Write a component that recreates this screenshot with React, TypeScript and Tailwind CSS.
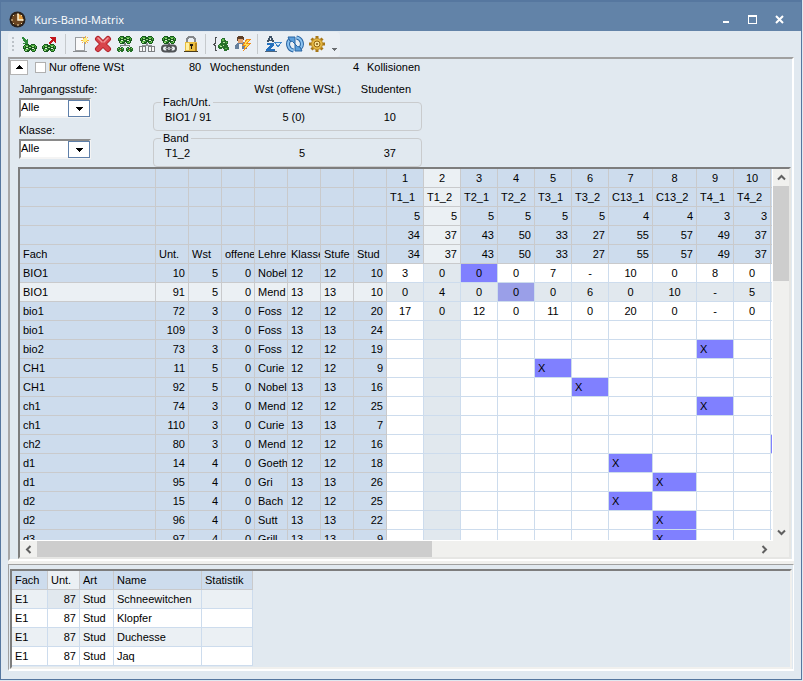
import React from "react";
import clsx from "clsx";

const META_HEADERS = [
  "Fach",
  "Unt.",
  "Wst",
  "offene",
  "Lehre",
  "Klasse",
  "Stufe",
  "Stud",
];

interface Band {
  name: string;
  wst: string;
  max: string;
  sum: string;
  wide?: boolean;
}

const BANDS: Band[] = [
  { name: "T1_1", wst: "5", max: "34", sum: "34" },
  { name: "T1_2", wst: "5", max: "37", sum: "37" },
  { name: "T2_1", wst: "5", max: "43", sum: "43" },
  { name: "T2_2", wst: "5", max: "50", sum: "50" },
  { name: "T3_1", wst: "5", max: "33", sum: "33" },
  { name: "T3_2", wst: "5", max: "27", sum: "27" },
  { name: "C13_1", wst: "4", max: "55", sum: "55", wide: true },
  { name: "C13_2", wst: "4", max: "57", sum: "57", wide: true },
  { name: "T4_1", wst: "3", max: "49", sum: "49" },
  { name: "T4_2", wst: "3", max: "37", sum: "37" },
  { name: "", wst: "", max: "", sum: "" },
];

interface Course {
  meta: string[];
  values?: string[];
  // index of the band the course is assigned to
  assigned?: number;
}

const COURSES: Course[] = [
  {
    meta: ["BIO1", "10", "5", "0", "Nobel", "12", "12", "10"],
    values: ["3", "0", "0", "0", "7", "-", "10", "0", "8", "0"],
    assigned: 2,
  },
  {
    meta: ["BIO1", "91", "5", "0", "Mend", "13", "13", "10"],
    values: ["0", "4", "0", "0", "0", "6", "0", "10", "-", "5"],
    assigned: 3,
  },
  {
    meta: ["bio1", "72", "3", "0", "Foss", "12", "12", "20"],
    values: ["17", "0", "12", "0", "11", "0", "20", "0", "-", "0"],
  },
  { meta: ["bio1", "109", "3", "0", "Foss", "13", "13", "24"] },
  { meta: ["bio2", "73", "3", "0", "Foss", "12", "12", "19"], assigned: 8 },
  { meta: ["CH1", "11", "5", "0", "Curie", "12", "12", "9"], assigned: 4 },
  { meta: ["CH1", "92", "5", "0", "Nobel", "13", "13", "16"], assigned: 5 },
  { meta: ["ch1", "74", "3", "0", "Mend", "12", "12", "25"], assigned: 8 },
  { meta: ["ch1", "110", "3", "0", "Curie", "13", "13", "7"] },
  { meta: ["ch2", "80", "3", "0", "Mend", "12", "12", "16"], assigned: 10 },
  { meta: ["d1", "14", "4", "0", "Goeth", "12", "12", "18"], assigned: 6 },
  { meta: ["d1", "95", "4", "0", "Gri", "13", "13", "26"], assigned: 7 },
  { meta: ["d2", "15", "4", "0", "Bach", "12", "12", "25"], assigned: 6 },
  { meta: ["d2", "96", "4", "0", "Sutt", "13", "13", "22"], assigned: 7 },
  { meta: ["d3", "97", "4", "0", "Grill", "13", "13", "9"], assigned: 7 },
];

const STUDENTS = ["Schneewitchen", "Klopfer", "Duchesse", "Jaq"];

const SELECTED_ROW = 1;
const SELECTED_BAND = 1;
const RIGHT_ALIGNED = [1, 2, 3, 7];

const CELL =
  "h-[19px] overflow-hidden whitespace-nowrap border-b border-r px-[3px] py-0 font-normal leading-[18px]";

/* ---------- icons ---------- */

interface LeavesProps {
  x?: number;
  y?: number;
}

// Pair of green course rings, shared by most toolbar icons
function Leaves({ x = 0, y = 0 }: LeavesProps) {
  return (
    <g transform={`translate(${x} ${y})`}>
      <path
        d="M2 0h4v1h2V0h4v1h1v1h1v3h-1v2h-1v1H9V7H8V6H7v1H6v1H2V7H1V5H0V2h1V1h1z"
        fill="#175a1c"
      />
      <path
        d="M2 1h3v1H2zM8 1h4v1H8zM1 2h1v2H1zM12 2h1v2h-1zM2 5h4v1H2zM9 6h3v1H9z"
        fill="#4fae3f"
      />
      <path d="M3 2h2v1H3zM9 2h2v1H9zM6 3h2v1H6zM2 6h2v1H2zM11 5h1v1h-1z" fill="#9bdc7c" />
      <path d="M3 4h2v1H3zM9 4h2v1H9z" fill="#e4f4dc" />
    </g>
  );
}

function ToolIcon({ children }: { children: React.ReactNode }) {
  return (
    <svg
      width="18"
      height="18"
      viewBox="0 0 18 18"
      shapeRendering="crispEdges"
      aria-hidden="true"
    >
      {children}
    </svg>
  );
}

const ImportIcon = (
  <ToolIcon>
    <Leaves x={3} y={9} />
    <path
      d="M2 2h2v1h1v1h1v1h1V4h1v5H3V8h2V7H4V6H3V4H2z"
      fill="#2f8a3a"
    />
  </ToolIcon>
);

const ExportIcon = (
  <ToolIcon>
    <Leaves x={0} y={9} />
    <path
      d="M8 2h6v6h-1V7h-1V6h-1v1h-1v1H9v1H7V7h1V6h1V5h1V4H9V3H8z"
      fill="#c3161c"
    />
  </ToolIcon>
);

const NewIcon = (
  <ToolIcon>
    <path d="M3.500 2.500h9v13h-9z" fill="#fafafa" stroke="#9a9da0" />
    <path d="M1 16h14v1H1z" fill="#8c8f92" />
    <path
      d="M13 1v8M9 5h8M10 2l6 6M16 2l-6 6"
      stroke="#f5b041"
      strokeWidth="1"
    />
    <circle cx="13" cy="5" r="2" fill="#fff07a" />
  </ToolIcon>
);

const DeleteIcon = (
  <ToolIcon>
    <g shapeRendering="auto" strokeLinecap="round">
      <path d="M4 4l10 10M14 4L4 14" stroke="#b3232b" strokeWidth="6" />
      <path d="M4 4l10 10M14 4L4 14" stroke="#d9464c" strokeWidth="4" />
      <path d="M4 3l4 4M14 3l-4 4" stroke="#f0989a" strokeWidth="1.5" />
    </g>
  </ToolIcon>
);

const TreeCoursesIcon = (
  <ToolIcon>
    <Leaves x={2} y={1} />
    <path d="M8 8h2v2h4v2h-1v-1H5v1H4v-2h4z" fill="#7d8083" />
    <path
      d="M2 12h2v1h1v-1h2v1h1v3H7v1H5v-1H4v1H2v-1H1v-3h1zM11 12h2v1h1v-1h2v1h1v3h-1v1h-2v-1h-1v1h-2v-1h-1v-3h1z"
      fill="#246f28"
    />
    <path
      d="M2 13h1v1H2zM6 13h1v1H6zM3 15h1v1H3zM11 13h1v1h-1zM15 13h1v1h-1zM12 15h1v1h-1z"
      fill="#86ce68"
    />
    <path d="M4 14h1v1H4zM13 14h1v1h-1z" fill="#d98a3c" />
  </ToolIcon>
);

const TreeTableIcon = (
  <ToolIcon>
    <Leaves x={2} y={1} />
    <path d="M8 8h2v2h4v2h-1v-1H5v1H4v-2h4z" fill="#8d9093" />
    <path
      d="M1.500 11.500h6v5h-6zM10.500 11.500h6v5h-6zM4.500 11v5M13.500 11v5"
      fill="#f7f7f7"
      stroke="#7d8083"
    />
  </ToolIcon>
);

const TreeLinkIcon = (
  <ToolIcon>
    <Leaves x={2} y={1} />
    <path d="M8 8h2v2H8z" fill="#6c6f72" />
    <g shapeRendering="auto" fill="none">
      <rect x="2" y="10.500" width="9" height="6" rx="3" stroke="#505356" strokeWidth="2" />
      <rect x="7" y="10.500" width="9" height="6" rx="3" stroke="#505356" strokeWidth="2" />
      <path d="M5 13.500h8" stroke="#a6a9ac" />
    </g>
  </ToolIcon>
);

const LockIcon = (
  <ToolIcon>
    <path
      d="M5 8V4l2-2h4l2 2v4"
      fill="none"
      stroke="#85888b"
      strokeWidth="2"
    />
    <path d="M3 7h12v9H3z" fill="#e9bd3f" />
    <path d="M4 8h3v7H4z" fill="#fff0a3" />
    <path d="M13 8h2v8h-2z" fill="#b5831c" />
    <path d="M2 16h14v1H2z" fill="#4a3c1a" />
    <path d="M8 9h3v2h-1v3H9v-3H8z" fill="#1f1a10" />
  </ToolIcon>
);

const BraceIcon = (
  <ToolIcon>
    <path
      d="M5 2.500H3.500V8L1.500 9.500l2 1V15.500H5"
      fill="none"
      stroke="#4b4e51"
    />
    <path
      d="M10 3h3v2h1v1h2v3h-1v1h1v2h1v3h-2v1h-3v-2h-1v-1h-1v1H7v-1H6v-3h1V9h1V8h1V4h1z"
      fill="#276f2b"
    />
    <path
      d="M10 4h2v2h-2zM7 10h2v1H7zM14 7h1v1h-1zM13 13h2v1h-2z"
      fill="#5fb94c"
    />
    <path d="M11 7h2v1h-2zM8 11h2v1H8zM11 10h1v1h-1z" fill="#b6e4a0" />
  </ToolIcon>
);

const UserFlashIcon = (
  <ToolIcon>
    <path d="M4 7h6l3 3v4H1v-4z" fill="#66809d" />
    <path d="M4 3h5v5H4z" fill="#e2a473" />
    <path d="M4 1h4l2 1v3H9V4H4v2H3V2z" fill="#5d3e28" />
    <path d="M5 9h3v5H5z" fill="#f3f3f3" />
    <path d="M12 4h5l-3 4h3l-8 9 2-6H8z" fill="#f08a1c" />
    <path d="M13 5h2l-3 4h3l-4 4 1-3h-2z" fill="#ffe14f" />
  </ToolIcon>
);

const SortIcon = (
  <ToolIcon>
    <path
      d="M5 1h3v2h1v2h1v2H8V6H5v1H3V5h1V3h1zM6 3v2h1V3z"
      fill="#3e5266"
      fillRule="evenodd"
    />
    <path
      d="M3 8h7v3H9v1H8v1H7v1h4v2H2v-2h1v-1h1v-1h1v-1h1v-1H3z"
      fill="#2470bd"
    />
    <path d="M1 16h12v1H1z" fill="#50667c" />
    <path d="M11 7.500h6L14 12z" fill="#d9ebfa" stroke="#3f86c9" />
  </ToolIcon>
);

const RefreshIcon = (
  <ToolIcon>
    <g shapeRendering="auto">
      <path
        d="M7.500 15.500A6.500 6.500 0 0 1 4 4.500M10.500 2.500A6.500 6.500 0 0 1 14 13.500"
        fill="none"
        stroke="#2864a3"
        strokeWidth="4"
      />
      <path
        d="M7.500 15.500A6.500 6.500 0 0 1 4 4.500M10.500 2.500A6.500 6.500 0 0 1 14 13.500"
        fill="none"
        stroke="#8cc3f0"
        strokeWidth="2"
      />
      <path
        d="M2 2h7v7L6.500 6.500 4 6zM16 16H9V9l2.500 2.500L14 12z"
        fill="#5d9fda"
        stroke="#2864a3"
      />
    </g>
  </ToolIcon>
);

const GearIcon = (
  <ToolIcon>
    <g shapeRendering="auto">
      <path
        d="M9 1v16M1 9h16M3.500 3.500l11 11M14.500 3.500l-11 11"
        stroke="#a87716"
        strokeWidth="3"
      />
      <circle cx="9" cy="9" r="5.500" fill="#e6ba45" stroke="#c0902a" />
      <circle cx="9" cy="9" r="3" fill="#f8e397" stroke="#93640f" />
      <circle cx="9" cy="9" r="1" fill="#7c5410" />
    </g>
  </ToolIcon>
);

const TOOL_GROUPS = [
  [
    { label: "Import", icon: ImportIcon },
    { label: "Export", icon: ExportIcon },
  ],
  [
    { label: "Neu", icon: NewIcon },
    { label: "Löschen", icon: DeleteIcon },
    { label: "Kurse", icon: TreeCoursesIcon },
    { label: "Bänder", icon: TreeTableIcon },
    { label: "Koppeln", icon: TreeLinkIcon },
    { label: "Fixieren", icon: LockIcon },
  ],
  [
    { label: "Klammer", icon: BraceIcon },
    { label: "Kollisionen", icon: UserFlashIcon },
  ],
  [
    { label: "Sortieren", icon: SortIcon },
    { label: "Aktualisieren", icon: RefreshIcon },
    { label: "Einstellungen", icon: GearIcon },
  ],
];

/* ---------- window parts ---------- */

function TitleBar() {
  return (
    <header className="flex h-[29px] shrink-0 items-center bg-[#6283a8] pl-2 pr-2 pt-1.5 text-white">
      <svg width="18" height="18" viewBox="0 0 18 18" aria-hidden="true">
        <circle cx="8.500" cy="8.500" r="8" fill="#2b221b" />
        <circle cx="8.500" cy="8.500" r="6" fill="#6b4520" />
        <path d="M9 9V3a6 6 0 0 1 5 6z" fill="#e09a3c" />
        <path
          d="M9 2v2M9 13v2M2 9h2M13 9h2M4 4l1 1M12 12l1 1M4 13l1-1M12 5l1-1"
          stroke="#f3d9a6"
        />
        <path d="M9 3v6h5" fill="none" stroke="#fff3d5" strokeWidth="1.5" />
      </svg>
      <h1 className="ml-[7px] flex-1 font-['Open_Sans','Noto_Sans',sans-serif] text-[11px] leading-4">
        Kurs-Band-Matrix
      </h1>
      <button
        type="button"
        aria-label="Minimieren"
        className="flex h-4 w-[27px] items-center justify-center"
      >
        <svg width="11" height="11" shapeRendering="crispEdges">
          <path d="M3 7h6v2H3z" fill="#fff" />
        </svg>
      </button>
      <button
        type="button"
        aria-label="Maximieren"
        className="flex h-4 w-[27px] items-center justify-center"
      >
        <svg width="11" height="11" shapeRendering="crispEdges">
          <path d="M1 1h9v9H1zM2 3v6h7V3z" fill="#fff" fillRule="evenodd" />
        </svg>
      </button>
      <button
        type="button"
        aria-label="Schließen"
        className="flex h-4 w-[27px] items-center justify-center"
      >
        <svg width="11" height="11">
          <path d="M2 2l7 7M9 2l-7 7" stroke="#fff" strokeWidth="2" />
        </svg>
      </button>
    </header>
  );
}

function Toolbar() {
  return (
    <div
      role="toolbar"
      className="flex h-[25px] items-center self-start rounded bg-[#eaeff4] pb-0.5 pl-1"
    >
      <div className="mr-1 flex flex-col gap-0.5">
        {[0, 1, 2, 3].map((dot) => (
          <span key={dot} className="size-0.5 bg-[#bcc2c8]" />
        ))}
      </div>
      {TOOL_GROUPS.map((group, i) => (
        <React.Fragment key={group[0].label}>
          {i > 0 && <span className="mx-[3px] h-5 w-0.5 border-l border-[#c6cacd]" />}
          {group.map(({ label, icon }) => (
            <button
              key={label}
              type="button"
              aria-label={label}
              className="flex h-[22px] w-[22px] items-center justify-center"
            >
              {icon}
            </button>
          ))}
        </React.Fragment>
      ))}
      <button
        type="button"
        aria-label="Weitere Optionen"
        className="flex h-[22px] w-3 items-end justify-center pb-1"
      >
        <svg width="5" height="3" shapeRendering="crispEdges">
          <path d="M0 0h5L2.500 3z" fill="#6b6e71" />
        </svg>
      </button>
    </div>
  );
}

interface ComboProps {
  id: string;
  label: string;
}

function Combo({ id, label }: ComboProps) {
  return (
    <div className="flex flex-col gap-0.5">
      <label htmlFor={id} className="leading-[13px]">
        {label}
      </label>
      <div className="relative h-5 w-[72px]">
        <select
          id={id}
          className="h-full w-full appearance-none rounded-none border-2 border-b-[#f4f4f4] border-l-[#8a8a8a] border-r-[#f4f4f4] border-t-[#8a8a8a] bg-white pb-0.5 leading-[14px]"
        >
          <option>Alle</option>
        </select>
        <span className="pointer-events-none absolute bottom-px right-px flex h-[17px] w-[22px] items-center justify-center border border-[#5f80aa] bg-white">
          <svg width="8" height="4" shapeRendering="crispEdges">
            <path d="M0 0h8L4 4z" fill="#000" />
          </svg>
        </span>
      </div>
    </div>
  );
}

interface SummaryBoxProps {
  legend: string;
  name: string;
  wst: string;
  students: string;
}

function SummaryBox({ legend, name, wst, students }: SummaryBoxProps) {
  return (
    <fieldset className="h-9 rounded border border-[#c9cbcd] pl-[11px] pr-[25px]">
      <legend className="-ml-1 px-0.5 leading-[14px]">{legend}</legend>
      <div className="flex pt-px leading-[14px]">
        <span className="w-[78px]">{name}</span>
        <span className="w-[62px] text-right">{wst}</span>
        <span className="flex-1 text-right">{students}</span>
      </div>
    </fieldset>
  );
}

function FilterArea() {
  return (
    <div className="shrink-0">
      <div className="flex h-4 items-center">
        <button
          type="button"
          aria-label="Einklappen"
          className="flex h-[15px] w-[18px] items-center justify-center border border-[#b4b4b4] bg-white"
        >
          <svg width="8" height="4" shapeRendering="crispEdges">
            <path d="M4 0l4 4H0z" fill="#000" />
          </svg>
        </button>
        <input
          id="onlyOpen"
          type="checkbox"
          className="ml-[7px] size-[11px] appearance-none border border-[#b0b0b0] bg-white"
        />
        <label htmlFor="onlyOpen" className="ml-[3px] w-[140px]">
          Nur offene WSt
        </label>
        <span className="w-[21px] shrink-0">80</span>
        <span className="w-[143px] shrink-0">Wochenstunden</span>
        <span className="w-[14px] shrink-0">4</span>
        <span>Kollisionen</span>
      </div>
      <div className="mt-2 flex pl-[9px]">
        <div className="flex w-[134px] flex-col gap-1.5">
          <Combo id="yearLevel" label="Jahrgangsstufe:" />
          <Combo id="classFilter" label="Klasse:" />
        </div>
        <div className="w-[269px]">
          <div className="flex justify-end gap-5 pr-[11px] leading-3">
            <span>Wst (offene WSt.)</span>
            <span>Studenten</span>
          </div>
          <SummaryBox
            legend="Fach/Unt."
            name="BIO1 / 91"
            wst="5 (0)"
            students="10"
          />
          <SummaryBox legend="Band" name="T1_2" wst="5" students="37" />
        </div>
      </div>
    </div>
  );
}

const HEAD_ROWS: { key: string; text: (band: Band, i: number) => string }[] = [
  { key: "index", text: (band, i) => (band.name ? String(i + 1) : "") },
  { key: "name", text: (band) => band.name },
  { key: "wst", text: (band) => band.wst },
  { key: "max", text: (band) => band.max },
  { key: "sum", text: (band) => band.sum },
];

function matrixCellColor(row: number, col: number, assigned?: number) {
  if (assigned === col) {
    return row === SELECTED_ROW ? "bg-[#9a9fe8]" : "bg-[#8080ff]";
  }
  if (row === SELECTED_ROW || col === SELECTED_BAND) {
    return "bg-[#e1e8ee]";
  }
  return "bg-white";
}

function MatrixTable() {
  return (
    <table className="w-[963px] table-fixed border-separate border-spacing-0">
      <colgroup>
        <col className="w-[136px]" />
        {META_HEADERS.slice(1).map((header) => (
          <col key={header} className="w-[33px]" />
        ))}
        {BANDS.map((band, i) => (
          <col key={i} className={band.wide ? "w-[44px]" : "w-[37px]"} />
        ))}
        <col />
      </colgroup>
      <thead>
        {HEAD_ROWS.map(({ key, text }, r) => (
          <tr key={key}>
            {META_HEADERS.map((header) => (
              <th
                key={header}
                className={clsx(CELL, "border-[#c9cacc] bg-[#cddced] text-left")}
              >
                {r === HEAD_ROWS.length - 1 && header}
              </th>
            ))}
            {BANDS.map((band, i) => (
              <th
                key={i}
                className={clsx(
                  CELL,
                  "border-[#c9cacc]",
                  i === SELECTED_BAND ? "bg-[#ebf0f4]" : "bg-[#cddced]",
                  r === 0 && "text-center",
                  r === 1 && "text-left",
                  r > 1 && "text-right"
                )}
              >
                {text(band, i)}
              </th>
            ))}
          </tr>
        ))}
      </thead>
      <tbody>
        {COURSES.map(({ meta, values, assigned }, r) => (
          <tr key={r}>
            {meta.map((value, i) => (
              <td
                key={i}
                className={clsx(
                  CELL,
                  "border-[#c9cacc]",
                  r === SELECTED_ROW ? "bg-[#ebf0f4]" : "bg-[#cddced]",
                  RIGHT_ALIGNED.includes(i) && "text-right"
                )}
              >
                {value}
              </td>
            ))}
            {BANDS.map((band, i) => (
              <td
                key={i}
                className={clsx(
                  CELL,
                  "border-[#cddced]",
                  matrixCellColor(r, i, assigned),
                  values && "text-center"
                )}
              >
                {values ? values[i] : assigned === i && band.name && "X"}
              </td>
            ))}
          </tr>
        ))}
      </tbody>
    </table>
  );
}

interface ScrollArrowProps {
  label: string;
  path: string;
}

function ScrollArrow({ label, path }: ScrollArrowProps) {
  return (
    <button
      type="button"
      aria-label={label}
      className="flex size-[17px] shrink-0 items-center justify-center"
    >
      <svg width="9" height="9" viewBox="0 0 9 9">
        <path d={path} fill="none" stroke="#606060" strokeWidth="2" />
      </svg>
    </button>
  );
}

function MatrixGrid() {
  return (
    <div className="ml-2 flex min-h-0 flex-1 flex-col border-2 border-b-[#e6e6e4] border-l-[#7d7d7d] border-r-[#e6e6e4] border-t-[#7d7d7d] bg-[#f0f0ee]">
      <div className="flex min-h-0 flex-1">
        <div className="min-w-0 flex-1 overflow-hidden border-b border-r border-white">
          <MatrixTable />
        </div>
        <div className="flex w-4 flex-col items-center">
          <ScrollArrow label="Nach oben" path="M1 6.500L4.500 3 8 6.500" />
          <div className="min-h-0 w-full flex-1">
            <div className="h-[28%] bg-[#cdcdcd]" />
          </div>
          <ScrollArrow label="Nach unten" path="M1 2.500L4.500 6 8 2.500" />
        </div>
      </div>
      <div className="flex h-4 items-center pr-4">
        <ScrollArrow label="Nach links" path="M6.500 1L3 4.500 6.500 8" />
        <div className="h-full flex-1">
          <div className="h-full w-[55%] bg-[#cdcdcd]" />
        </div>
        <ScrollArrow label="Nach rechts" path="M2.500 1L6 4.500 2.500 8" />
      </div>
    </div>
  );
}

function StudentTable() {
  return (
    <table className="w-[241px] table-fixed border-separate border-spacing-0">
      <colgroup>
        <col className="w-[36px]" />
        <col className="w-[32px]" />
        <col className="w-[34px]" />
        <col className="w-[88px]" />
        <col className="w-[51px]" />
      </colgroup>
      <thead>
        <tr>
          {["Fach", "Unt.", "Art", "Name", "Statistik"].map((header) => (
            <th
              key={header}
              className={clsx(
                CELL,
                "border-[#c9cacc] text-left",
                header === "Unt." ? "bg-[#ebf0f4]" : "bg-[#cddced]"
              )}
            >
              {header}
            </th>
          ))}
        </tr>
      </thead>
      <tbody>
        {STUDENTS.map((name, r) => (
          <tr key={name} className={r % 2 === 0 ? "bg-[#ebf0f4]" : "bg-white"}>
            <td className={clsx(CELL, "border-[#cddced]")}>E1</td>
            <td
              className={clsx(
                CELL,
                "border-[#cddced] text-right",
                r === 0 && "bg-[#e1e8ee]"
              )}
            >
              87
            </td>
            <td className={clsx(CELL, "border-[#cddced]")}>Stud</td>
            <td className={clsx(CELL, "border-[#cddced]")}>{name}</td>
            <td className={clsx(CELL, "border-[#cddced]")} />
          </tr>
        ))}
      </tbody>
    </table>
  );
}

function App() {
  return (
    <div className="h-screen bg-[#dfe8f0] pb-px pr-px font-['Liberation_Sans',Arial,sans-serif] text-[11px] leading-[14px] text-black">
      <div className="flex h-full flex-col border border-t-2 border-[#56779f] bg-[#e1e9f0]">
        <TitleBar />
        <div className="flex min-h-0 flex-1 flex-col px-[7px] pb-2 pt-px">
          <Toolbar />
          <main className="flex min-h-0 flex-1 flex-col border-2 border-b-white border-l-[#a8a8a8] border-r-white border-t-[#a0a0a0] pr-px">
            <FilterArea />
            <MatrixGrid />
          </main>
          <div className="h-[3px] shrink-0 bg-[#f0f0ee]" />
          <section className="shrink-0 border border-b-2 border-b-white border-l-[#a0a0a0] border-r-white border-t-[#a0a0a0] px-px pt-1">
            <div className="border-2 border-b-[#f0f0ee] border-l-[#7d7d7d] border-r-[#f0f0ee] border-t-[#7d7d7d] pb-px">
              <StudentTable />
            </div>
          </section>
        </div>
      </div>
    </div>
  );
}

export default App;
